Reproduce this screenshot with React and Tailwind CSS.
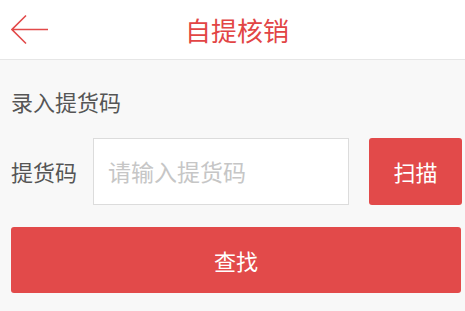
export default function App() {
  return (
    <div
      className="min-h-screen bg-[#f8f8f8]"
      style={{ fontFamily: '"Noto Sans CJK SC", "Noto Sans", sans-serif' }}
    >
      <div className="grid h-[60px] grid-cols-[60px_1fr_51px] items-center border-b border-[#e6e6e6] bg-white">
        <button className="flex h-full items-center pl-[11px]">
          <svg width="38" height="32" viewBox="0 0 38 32" fill="none" stroke="#e24a4a" strokeWidth="1.6">
            <path d="M1 15.5h36M15 1.5L1 15.5l14 14" />
          </svg>
        </button>
        <h1 className="text-center text-[26px] leading-none text-[#e24545]">自提核销</h1>
        <div />
      </div>

      <div className="pl-[11px] pr-[4px]">
        <div className="pt-[28px] text-[22px] leading-[26px] text-[#555]">录入提货码</div>

        <div className="mt-[24px] flex h-[67px] items-stretch">
          <label className="flex w-[82px] shrink-0 items-center text-[22px] text-[#555]">提货码</label>
          <input
            className="w-[256px] shrink-0 border border-[#dcdcdc] bg-white px-[14px] text-[23px] text-[#555] outline-none placeholder:text-[#c6c6c6]"
            placeholder="请输入提货码"
          />
          <button className="ml-[20px] flex w-[93px] shrink-0 items-center justify-center rounded-[3px] bg-[#e24a4a] text-[22px] text-white">
            扫描
          </button>
        </div>

        <button className="mt-[22px] flex h-[66px] w-full items-center justify-center rounded-[3px] bg-[#e24a4a] text-[22px] text-white">
          查找
        </button>
      </div>
    </div>
  );
}
